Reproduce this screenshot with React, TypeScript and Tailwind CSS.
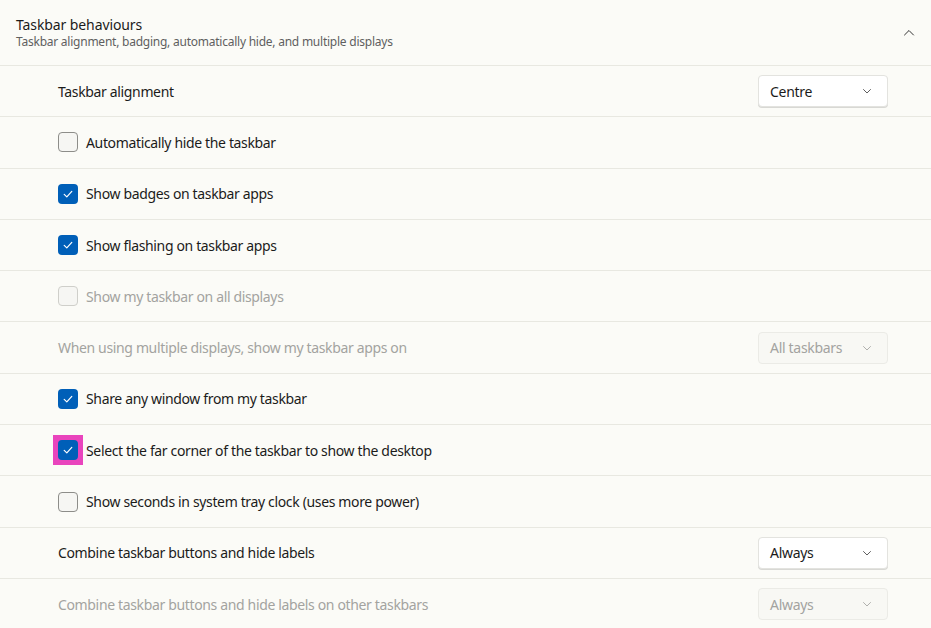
import React from "react";

const font = { fontFamily: '"Segoe UI", "Noto Sans", sans-serif' };

const Check = () => (
  <svg width="12" height="12" viewBox="0 0 12 12" fill="none">
    <path d="M2.2 6.4 L4.8 8.9 L9.8 3.4" stroke="white" strokeWidth="1.2" strokeLinecap="round" strokeLinejoin="round" />
  </svg>
);

const Chevron = ({ up = false, color = "#5f5f5f" }: { up?: boolean; color?: string }) => (
  <svg width="12" height="12" viewBox="0 0 12 12" fill="none">
    <path d={up ? "M1.5 8 L6 3.5 L10.5 8" : "M2.5 4.5 L6 8 L9.5 4.5"} stroke={color} strokeWidth="1" strokeLinecap="round" strokeLinejoin="round" />
  </svg>
);

const Box = ({ checked, disabled }: { checked?: boolean; disabled?: boolean }) =>
  checked ? (
    <div className="w-5 h-5 rounded-[4px] bg-[#005fb8] flex items-center justify-center">
      <Check />
    </div>
  ) : (
    <div
      className={
        "w-5 h-5 rounded-[4px] border bg-[#f6f6f3] " +
        (disabled ? "border-[#cfcfca]" : "border-[#8d8d89]")
      }
    />
  );

const Select = ({ value, disabled }: { value: string; disabled?: boolean }) => (
  <div
    className={
      "w-[130px] h-[32px] rounded-[4px] border flex items-center justify-between pl-[11px] pr-[14px] text-[14px] tracking-[-0.3px] " +
      (disabled
        ? "bg-[#f8f8f4] border-[#ebebe6] text-[#a3a3a0]"
        : "bg-white border-[#e3e3df] text-[#1b1b1b] shadow-[0_1px_0_#d8d8d4]")
    }
  >
    <span>{value}</span>
    <Chevron color={disabled ? "#b0b0ad" : "#5f5f5f"} />
  </div>
);

const Row = ({ children }: { children: React.ReactNode }) => (
  <div className="h-[51.3px] border-b border-[#e8e8e1] flex items-center justify-between pl-[58px] pr-[43px] text-[14px] tracking-[-0.35px] text-[#1b1b1b]">
    {children}
  </div>
);

const CheckRow = ({ label, checked, disabled, highlight }: { label: string; checked?: boolean; disabled?: boolean; highlight?: boolean }) => (
  <Row>
    <div className="flex items-center">
      {highlight ? (
        <div className="-m-[5px] p-[5px] bg-[#e944bd]">
          <Box checked={checked} />
        </div>
      ) : (
        <Box checked={checked} disabled={disabled} />
      )}
      <span className={"ml-2 " + (disabled ? "text-[#a3a3a0]" : "")}>{label}</span>
    </div>
  </Row>
);

export default function App() {
  return (
    <div style={font} className="w-[931px] h-[628px] overflow-hidden bg-[#fbfbf7]">
      <div className="h-[66px] border-b border-[#e8e8e1] flex items-center justify-between pl-4 pr-[16px]">
        <div className="flex flex-col">
          <span className="text-[14px] text-[#1b1b1b] leading-[19px] tracking-[-0.1px]">Taskbar behaviours</span>
          <span className="text-[12px] text-[#5f5f5f] leading-[16px] tracking-[-0.24px]">
            Taskbar alignment, badging, automatically hide, and multiple displays
          </span>
        </div>
        <Chevron up color="#333" />
      </div>
      <Row>
        <span>Taskbar alignment</span>
        <Select value="Centre" />
      </Row>
      <CheckRow label="Automatically hide the taskbar" />
      <CheckRow label="Show badges on taskbar apps" checked />
      <CheckRow label="Show flashing on taskbar apps" checked />
      <CheckRow label="Show my taskbar on all displays" disabled />
      <Row>
        <span className="text-[#a3a3a0]">When using multiple displays, show my taskbar apps on</span>
        <Select value="All taskbars" disabled />
      </Row>
      <CheckRow label="Share any window from my taskbar" checked />
      <CheckRow label="Select the far corner of the taskbar to show the desktop" checked highlight />
      <CheckRow label="Show seconds in system tray clock (uses more power)" />
      <Row>
        <span>Combine taskbar buttons and hide labels</span>
        <Select value="Always" />
      </Row>
      <Row>
        <span className="text-[#a3a3a0]">Combine taskbar buttons and hide labels on other taskbars</span>
        <Select value="Always" disabled />
      </Row>
    </div>
  );
}
